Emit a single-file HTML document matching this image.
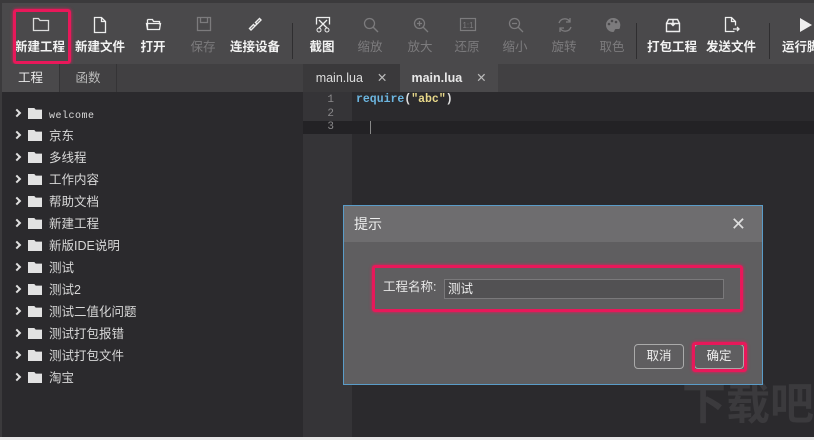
<!DOCTYPE html>
<html><head><meta charset="utf-8"><style>
*{margin:0;padding:0;box-sizing:border-box}
html,body{width:814px;height:440px;overflow:hidden}
body{background:#2b2a2d;position:relative;font-family:"Liberation Sans","Noto Sans CJK SC",sans-serif;}
.a{position:absolute}
#tb{left:0;top:0;width:814px;height:64px;background:#4a494b;border-top:3px solid #3b3a3c;border-left:2px solid #3b3a3c}
.it{position:absolute;top:3px;width:60px;height:58px;text-align:center;color:#f2f2f2;font-size:12.5px;font-weight:bold}
.it.d{color:#7c7b7d;font-weight:normal}
.it svg{position:absolute;left:22px;top:10px}
.it span{position:absolute;left:0;right:0;top:30px;white-space:nowrap}
.sep{position:absolute;top:20px;width:1px;height:36px;background:#2f2e30}
#tabs{left:0;top:64px;width:814px;height:28px;background:#414042;border-left:2px solid #3b3a3c}
.tab{position:absolute;top:0;height:28px;line-height:28px;font-size:12.5px;color:#e8e8e8;text-align:center}
.tree{left:14px;font-size:12.5px;color:#d8d8d8;height:22px;line-height:22px;white-space:nowrap}
.tree i{display:inline-block;width:6px;height:6px;border-right:2px solid #e0e0e0;border-bottom:2px solid #e0e0e0;transform:rotate(-45deg);margin:0 8px 2px 0}
.tree b{display:inline-block;width:14px;height:11px;background:#e2e2e2;vertical-align:-1px;margin-right:7px;clip-path:polygon(0 0,45% 0,55% 15%,100% 15%,100% 100%,0 100%)}
.ln{left:304px;width:30px;text-align:right;font-family:"Liberation Mono",monospace;font-size:11px;color:#8a898b;height:13px;line-height:13px}
.red{position:absolute;border:3px solid #e8185a;border-radius:3px;box-shadow:0 0 3px #e8185a}
</style></head><body>
<div class="a" id="tb">
<div class="it" style="left:8px"><svg width="18" height="16"><path d="M1.5 2.5h5l1.5 2h8.5v10h-15z" fill="none" stroke="#ddd" stroke-width="1.3"/></svg><span>新建工程</span></div>
<div class="it" style="left:68px"><svg width="16" height="18"><path d="M2.5 1.5h7l4 4v11h-11z M9.5 1.5v4h4" fill="none" stroke="#eee" stroke-width="1.3"/></svg><span>新建文件</span></div>
<div class="it" style="left:121px"><svg width="18" height="16"><path d="M2.5 3.5h5l1 2h6v3 M1.5 7.5h14l-1 6h-12z M2.5 3.5v10" fill="none" stroke="#eee" stroke-width="1.3"/></svg><span>打开</span></div>
<div class="it d" style="left:171px"><svg width="18" height="16"><path d="M2.5 1.5h13v13h-13z M5.5 1.5v5h7v-5" fill="none" stroke="#7c7b7d" stroke-width="1.3"/></svg><span>保存</span></div>
<div class="it" style="left:223px"><svg width="18" height="18"><path d="M4 14l-1.5-1.5 4-4 1.5 1.5z M14 4l-1.5-1.5-4 4 1.5 1.5z M6 12l6-6" fill="none" stroke="#eee" stroke-width="1.4"/></svg><span>连接设备</span></div>
<div class="sep" style="left:290px"></div>
<div class="it" style="left:290px"><svg width="18" height="18"><path d="M2.5 1.5h13v7 M2.5 1.5v7 M5 4l8 8 M13 4l-8 8" fill="none" stroke="#eee" stroke-width="1.3"/><circle cx="5" cy="14" r="2" fill="none" stroke="#eee"/><circle cx="13" cy="14" r="2" fill="none" stroke="#eee"/></svg><span>截图</span></div>
<div class="it d" style="left:338px"><svg width="18" height="18"><circle cx="7.5" cy="7.5" r="5" fill="none" stroke="#7c7b7d" stroke-width="1.3"/><path d="M11 11l5 5" stroke="#7c7b7d" stroke-width="1.4"/></svg><span>缩放</span></div>
<div class="it d" style="left:388px"><svg width="18" height="18"><circle cx="7.5" cy="7.5" r="5" fill="none" stroke="#7c7b7d" stroke-width="1.3"/><path d="M11 11l5 5 M5 7.5h5 M7.5 5v5" stroke="#7c7b7d" stroke-width="1.3"/></svg><span>放大</span></div>
<div class="it d" style="left:435px"><svg width="18" height="18"><rect x="1.5" y="2.5" width="15" height="12" fill="none" stroke="#7c7b7d" stroke-width="1.2"/><text x="9" y="12" font-size="8" fill="#7c7b7d" text-anchor="middle" font-family="Liberation Sans">1:1</text></svg><span>还原</span></div>
<div class="it d" style="left:483px"><svg width="18" height="18"><circle cx="7.5" cy="7.5" r="5" fill="none" stroke="#7c7b7d" stroke-width="1.3"/><path d="M11 11l5 5 M5 7.5h5" stroke="#7c7b7d" stroke-width="1.3"/></svg><span>缩小</span></div>
<div class="it d" style="left:532px"><svg width="18" height="18"><path d="M14 6a6 6 0 0 0-11 1 M4 12a6 6 0 0 0 11-1 M14 2v4h-4 M4 16v-4h4" fill="none" stroke="#7c7b7d" stroke-width="1.3"/></svg><span>旋转</span></div>
<div class="it d" style="left:580px"><svg width="18" height="18"><path d="M9 2a7 7 0 1 0 0 14c2 0 1-3 3-3h3a2 2 0 0 0 1-2A7 7 0 0 0 9 2z" fill="#7c7b7d"/><circle cx="5" cy="8" r="1.3" fill="#4a494b"/><circle cx="8" cy="5" r="1.3" fill="#4a494b"/><circle cx="12" cy="6" r="1.3" fill="#4a494b"/></svg><span>取色</span></div>
<div class="sep" style="left:634px"></div>
<div class="it" style="left:640px"><svg width="18" height="18"><path d="M2.5 7.5h13v8h-13z M2.5 7.5l2-4h9l2 4 M9 3v6 M6.5 7l2.5 2.5 2.5-2.5" fill="none" stroke="#eee" stroke-width="1.4"/></svg><span>打包工程</span></div>
<div class="it" style="left:699px"><svg width="18" height="18"><path d="M11.5 15.5h-9v-14h6l4 4v4 M8.5 1.5v4h4 M10 13h6 M14 11l2 2-2 2" fill="none" stroke="#eee" stroke-width="1.3"/></svg><span>发送文件</span></div>
<div class="sep" style="left:767px"></div>
<div class="it" style="left:772px"><svg width="18" height="18"><path d="M4 2l12 7-12 7z" fill="#eee"/></svg><span style="text-align:left;left:8px">运行脚本</span></div>
</div>
<div class="red" style="left:13px;top:9px;width:58px;height:55px"></div>
<div class="a" id="tabs">
<div class="tab" style="left:0;width:57px;background:#4a494b">工程</div>
<div class="tab" style="left:57px;width:58px;color:#bbb;border-right:1px solid #353436;border-left:1px solid #353436">函数</div>
<div class="tab" style="left:301px;width:97px;background:#3a393b;color:#ddd">main.lua&nbsp;&nbsp;&nbsp;&nbsp;<span style="color:#bbb">✕</span></div>
<div class="tab" style="left:398px;width:98px;background:#4a494b;font-weight:bold">main.lua&nbsp;&nbsp;&nbsp;&nbsp;<span style="color:#bbb;font-weight:normal">✕</span></div>
</div>
<div class="a" style="left:0;top:92px;width:2px;height:348px;background:#3b3a3c"></div>
<div class="a" style="left:303px;top:92px;width:49px;height:348px;background:#353437"></div>
<div class="a" style="left:303px;top:121px;width:511px;height:13px;background:#232225"></div>
<div class="a ln" style="top:94px">1</div>
<div class="a ln" style="top:108px">2</div>
<div class="a ln" style="top:121px">3</div>
<div class="a" style="left:356px;top:93px;font-family:'Liberation Mono',monospace;font-size:11.5px;font-weight:bold;color:#6cb6e0">require<span style="color:#e0e0e0">(</span><span style="color:#e8d88a">"abc"</span><span style="color:#e0e0e0">)</span></div>
<div class="a" style="left:370px;top:121px;width:1px;height:13px;background:#888"></div>
<div class="a tree" style="top:103px"><i></i><b></b><span style="font-family:'Liberation Mono',monospace;font-size:10px;letter-spacing:0.5px">welcome</span></div>
<div class="a tree" style="top:125px"><i></i><b></b>京东</div>
<div class="a tree" style="top:147px"><i></i><b></b>多线程</div>
<div class="a tree" style="top:169px"><i></i><b></b>工作内容</div>
<div class="a tree" style="top:191px"><i></i><b></b>帮助文档</div>
<div class="a tree" style="top:213px"><i></i><b></b>新建工程</div>
<div class="a tree" style="top:235px"><i></i><b></b>新版IDE说明</div>
<div class="a tree" style="top:257px"><i></i><b></b>测试</div>
<div class="a tree" style="top:279px"><i></i><b></b>测试2</div>
<div class="a tree" style="top:301px"><i></i><b></b>测试二值化问题</div>
<div class="a tree" style="top:323px"><i></i><b></b>测试打包报错</div>
<div class="a tree" style="top:345px"><i></i><b></b>测试打包文件</div>
<div class="a tree" style="top:367px"><i></i><b></b>淘宝</div>
<div class="a" style="left:682px;top:380px;font-size:44px;line-height:50px;font-weight:bold;color:#3b3a3d;white-space:nowrap">下载吧</div>
<div class="a" style="left:343px;top:205px;width:420px;height:180px;background:#5f5e60;border:1px solid #5a9cc8">
 <div style="height:36px;background:#6e6d6f;color:#eee;font-size:14px;line-height:36px;padding-left:10px">提示<span style="position:absolute;right:16px;top:0;font-size:18px;color:#ddd">✕</span></div>
 <div class="a" style="left:39px;top:72px;font-size:12.5px;line-height:18px;color:#e6e6e6">工程名称:</div>
 <div class="a" style="left:100px;top:73px;width:280px;height:20px;background:#525153;border:1px solid #7a797b;font-size:12.5px;color:#eee;line-height:18px;padding-left:3px">测试</div>
 <div class="a" style="left:290px;top:138px;width:50px;height:25px;border:1px solid #aaa;border-radius:4px;color:#eee;font-size:12.5px;text-align:center;line-height:23px">取消</div>
 <div class="a" style="left:350px;top:138px;width:50px;height:25px;border:1px solid #aaa;border-radius:4px;color:#eee;font-size:12.5px;text-align:center;line-height:23px">确定</div>
</div>
<div class="red" style="left:372px;top:265px;width:371px;height:47px"></div>
<div class="red" style="left:692px;top:342px;width:55px;height:30px"></div>
<div class="a" style="left:0;top:437px;width:814px;height:3px;background:#e8e8e8"></div>
</body></html>
